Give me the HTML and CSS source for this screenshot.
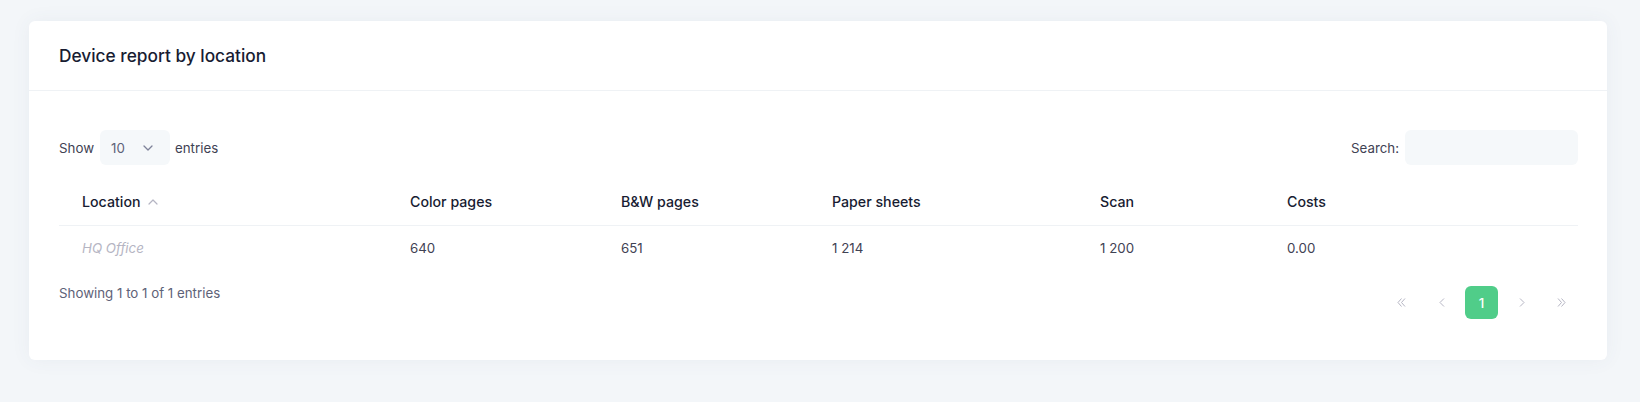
FILE: index.html
```html
<!DOCTYPE html>
<html lang="en">
<head>
    <meta charset="UTF-8">
    <meta name="viewport" content="width=device-width, initial-scale=1.0">
    <title>Device report by location</title>
    <link rel="stylesheet" href="styles.css">
</head>
<body>
    <div class="page">
        <div class="card">
            <div class="card-header">
                <h3 class="card-title">Device report by location</h3>
            </div>
            <div class="card-body">
                <div class="dt-top">
                    <label class="dt-length">
                        Show
                        <span class="select">
                            <span>10</span>
                            <svg width="10" height="6" viewBox="0 0 10 6"><path d="M1 1l4 4 4-4" fill="none" stroke="#7e8299" stroke-width="1.3" stroke-linecap="round" stroke-linejoin="round"/></svg>
                        </span>
                        entries
                    </label>
                    <label class="dt-search">
                        Search:
                        <span class="search-input"></span>
                    </label>
                </div>

                <table class="report">
                    <thead>
                        <tr>
                            <th class="col-location">Location
                                <svg class="sort" width="10" height="6" viewBox="0 0 10 6"><path d="M1 5l4-4 4 4" fill="none" stroke="#b5b5c3" stroke-width="1.2" stroke-linecap="round" stroke-linejoin="round"/></svg>
                            </th>
                            <th class="col-color">Color pages</th>
                            <th class="col-bw">B&amp;W pages</th>
                            <th class="col-paper">Paper sheets</th>
                            <th class="col-scan">Scan</th>
                            <th>Costs</th>
                        </tr>
                    </thead>
                    <tbody>
                        <tr>
                            <td class="location">HQ Office</td>
                            <td>640</td>
                            <td>651</td>
                            <td>1 214</td>
                            <td>1 200</td>
                            <td>0.00</td>
                        </tr>
                    </tbody>
                </table>

                <div class="dt-bottom">
                    <div class="dt-info">Showing 1 to 1 of 1 entries</div>
                    <ul class="pagination">
                        <li class="page-item">
                            <svg width="9" height="9" viewBox="0 0 9 9"><path d="M4.5 0.5L1 4.5l3.5 4M8 0.5L4.5 4.5 8 8.5" fill="none" stroke="#b5b5c3" stroke-width="1"/></svg>
                        </li>
                        <li class="page-item">
                            <svg width="6" height="9" viewBox="0 0 6 9"><path d="M5 0.5L1 4.5l4 4" fill="none" stroke="#b5b5c3" stroke-width="1"/></svg>
                        </li>
                        <li class="page-item active">1</li>
                        <li class="page-item">
                            <svg width="6" height="9" viewBox="0 0 6 9"><path d="M1 0.5l4 4-4 4" fill="none" stroke="#b5b5c3" stroke-width="1"/></svg>
                        </li>
                        <li class="page-item">
                            <svg width="9" height="9" viewBox="0 0 9 9"><path d="M1 0.5l3.5 4L1 8.5M4.5 0.5L8 4.5 4.5 8.5" fill="none" stroke="#b5b5c3" stroke-width="1"/></svg>
                        </li>
                    </ul>
                </div>
            </div>
        </div>
    </div>
</body>
</html>
```

FILE: styles.css
```css
body {
    margin: 0;
    background-color: #f3f6f9;
    font-family: Inter, "Noto Sans", Arial, sans-serif;
    font-size: 13.3px;
    color: #3f4254;
}

.page {
    padding: 21px 33px 42px 29px;
}

.card {
    background: #ffffff;
    border-radius: 6px;
    box-shadow: 0 0 20px 0 rgba(76, 87, 125, 0.06);
}

.card-header {
    display: flex;
    align-items: center;
    height: 69px;
    padding: 0 30px;
    border-bottom: 1px solid #eff2f5;
}

.card-title {
    margin: 0;
    font-size: 17.3px;
    font-weight: 500;
    color: #181c32;
}

.card-body {
    padding: 39px 29px 41px 30px;
}

.dt-top {
    display: flex;
    justify-content: space-between;
    align-items: center;
    height: 35px;
}

.dt-length,
.dt-search {
    display: flex;
    align-items: center;
    color: #3f4254;
}

.select {
    display: flex;
    align-items: center;
    justify-content: space-between;
    width: 70px;
    height: 35px;
    box-sizing: border-box;
    padding: 0 17px 0 11px;
    margin: 0 5px 0 6px;
    background: #f5f8fa;
    border-radius: 6px;
    color: #5e6278;
}

.search-input {
    display: block;
    width: 173px;
    height: 35px;
    margin-left: 6px;
    background: #f5f8fa;
    border-radius: 6px;
}

.report {
    width: 100%;
    margin-top: 12px;
    border-collapse: collapse;
}

.report th {
    height: 48px;
    padding: 0 0 0 20px;
    text-align: left;
    font-weight: 500;
    font-size: 14.2px;
    color: #181c32;
    border-bottom: 1px solid #eff2f5;
}

.report td {
    height: 44px;
    padding: 0 0 0 20px;
    color: #3f4254;
}

.report th:first-child,
.report td:first-child {
    padding-left: 23px;
}

.col-location { width: 308px; }
.col-color { width: 191px; }
.col-bw { width: 191px; }
.col-paper { width: 248px; }
.col-scan { width: 167px; }

.sort {
    margin-left: 4px;
    vertical-align: 2px;
}

.report td.location {
    color: #b5b5c3;
    font-style: italic;
}

.dt-bottom {
    display: flex;
    justify-content: space-between;
    align-items: flex-start;
    margin-top: 16px;
}

.dt-info {
    margin-top: -1px;
    color: #5e6278;
}

.pagination {
    display: flex;
    gap: 7px;
    margin: 0;
    padding: 0;
    list-style: none;
}

.page-item {
    display: flex;
    align-items: center;
    justify-content: center;
    width: 33px;
    height: 33px;
    border-radius: 6px;
    color: #ffffff;
    font-weight: 500;
}

.page-item.active {
    background: #50cd89;
}
```
